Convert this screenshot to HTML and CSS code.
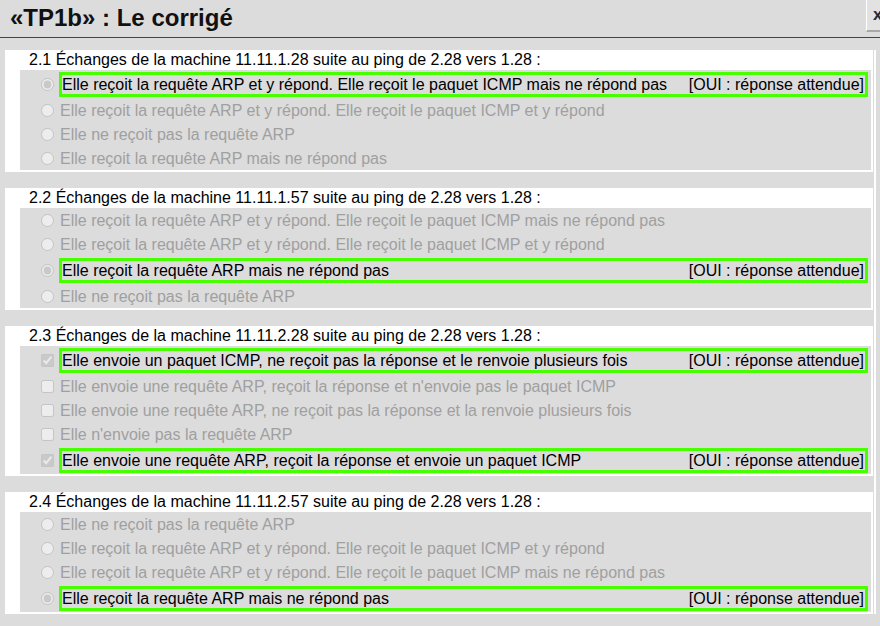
FILE: index.html
```html
<!DOCTYPE html>
<html lang="fr">
<head>
<meta charset="utf-8">
<title>«TP1b» : Le corrigé</title>
<link rel="stylesheet" href="styles.css">
</head>
<body>
<header class="topbar">
  <h1 class="title">«TP1b» : Le corrigé</h1>
  <button class="close" type="button">x</button>
</header>
<div class="content">
  <main class="cards">
    <section class="card">
      <div class="question">2.1 Échanges de la machine 11.11.1.28 suite au ping de 2.28 vers 1.28 :</div>
      <div class="answers">
        <div class="row ok"><input type="radio" disabled checked><div class="label"><span>Elle reçoit la requête ARP et y répond. Elle reçoit le paquet ICMP mais ne répond pas</span><span>[OUI : réponse attendue]</span></div></div>
        <div class="row"><input type="radio" disabled><div class="label">Elle reçoit la requête ARP et y répond. Elle reçoit le paquet ICMP et y répond</div></div>
        <div class="row"><input type="radio" disabled><div class="label">Elle ne reçoit pas la requête ARP</div></div>
        <div class="row"><input type="radio" disabled><div class="label">Elle reçoit la requête ARP mais ne répond pas</div></div>
      </div>
    </section>
    <section class="card">
      <div class="question">2.2 Échanges de la machine 11.11.1.57 suite au ping de 2.28 vers 1.28 :</div>
      <div class="answers">
        <div class="row"><input type="radio" disabled><div class="label">Elle reçoit la requête ARP et y répond. Elle reçoit le paquet ICMP mais ne répond pas</div></div>
        <div class="row"><input type="radio" disabled><div class="label">Elle reçoit la requête ARP et y répond. Elle reçoit le paquet ICMP et y répond</div></div>
        <div class="row ok"><input type="radio" disabled checked><div class="label"><span>Elle reçoit la requête ARP mais ne répond pas</span><span>[OUI : réponse attendue]</span></div></div>
        <div class="row"><input type="radio" disabled><div class="label">Elle ne reçoit pas la requête ARP</div></div>
      </div>
    </section>
    <section class="card">
      <div class="question">2.3 Échanges de la machine 11.11.2.28 suite au ping de 2.28 vers 1.28 :</div>
      <div class="answers">
        <div class="row ok"><input type="checkbox" disabled checked><div class="label"><span>Elle envoie un paquet ICMP, ne reçoit pas la réponse et le renvoie plusieurs fois</span><span>[OUI : réponse attendue]</span></div></div>
        <div class="row"><input type="checkbox" disabled><div class="label">Elle envoie une requête ARP, reçoit la réponse et n'envoie pas le paquet ICMP</div></div>
        <div class="row"><input type="checkbox" disabled><div class="label">Elle envoie une requête ARP, ne reçoit pas la réponse et la renvoie plusieurs fois</div></div>
        <div class="row"><input type="checkbox" disabled><div class="label">Elle n'envoie pas la requête ARP</div></div>
        <div class="row ok"><input type="checkbox" disabled checked><div class="label"><span>Elle envoie une requête ARP, reçoit la réponse et envoie un paquet ICMP</span><span>[OUI : réponse attendue]</span></div></div>
      </div>
    </section>
    <section class="card">
      <div class="question">2.4 Échanges de la machine 11.11.2.57 suite au ping de 2.28 vers 1.28 :</div>
      <div class="answers">
        <div class="row"><input type="radio" disabled><div class="label">Elle ne reçoit pas la requête ARP</div></div>
        <div class="row"><input type="radio" disabled><div class="label">Elle reçoit la requête ARP et y répond. Elle reçoit le paquet ICMP et y répond</div></div>
        <div class="row"><input type="radio" disabled><div class="label">Elle reçoit la requête ARP et y répond. Elle reçoit le paquet ICMP mais ne répond pas</div></div>
        <div class="row ok"><input type="radio" disabled checked><div class="label"><span>Elle reçoit la requête ARP mais ne répond pas</span><span>[OUI : réponse attendue]</span></div></div>
      </div>
    </section>
  </main>
  <div class="track"></div>
</div>
</body>
</html>
```
FILE: styles.css
```css
html, body {
  margin: 0;
  padding: 0;
  background: #dcdcdc;
  overflow: hidden;
  font-family: "Liberation Sans", Arial, sans-serif;
  font-size: 16px;
  color: #000;
}

.topbar {
  display: flex;
  align-items: flex-start;
  height: 37px;
  border-bottom: 1px solid #444;
  overflow: hidden;
}

.title {
  margin: 0;
  padding-left: 10px;
  font-size: 24px;
  font-weight: bold;
  line-height: 36px;
  flex: 1;
  color: #111;
}

.close {
  width: 30px;
  height: 32px;
  margin-right: -16px;
  padding: 0 0 0 6px;
  text-align: left;
  border: none;
  border-left: 1px solid #fff;
  border-bottom: 2px solid #a8a8a8;
  background: #e2e2e2;
  font-family: "Liberation Sans", Arial, sans-serif;
  font-weight: bold;
  font-size: 17px;
  color: #1a2a40;
}

.content {
  display: flex;
  align-items: stretch;
  padding-top: 12px;
}

.cards {
  flex: 1;
  display: flex;
  flex-direction: column;
  gap: 16px;
  margin-left: 5px;
}

.track {
  width: 2px;
  margin: 0 4px 0 1px;
  background: #fff;
}

.card {
  background: #fff;
  padding: 0 2px 2px 15px;
}

.question {
  height: 20px;
  line-height: 20px;
  padding-left: 9px;
}

.answers {
  background: #dcdcdc;
}

.row {
  display: flex;
  align-items: center;
  height: 24px;
  color: #a0a0a0;
}

.row input {
  width: 13px;
  height: 13px;
  margin: 0 6px 0 21px;
  flex: none;
}

.row.ok {
  height: 28px;
  color: #000;
}

.label {
  flex: 1;
  line-height: 19px;
}

.row.ok .label {
  display: flex;
  justify-content: space-between;
  margin-left: -1px;
  margin-right: 3px;
  padding: 0 1px 0 0;
  border: 3px solid #48ff00;
}
```
